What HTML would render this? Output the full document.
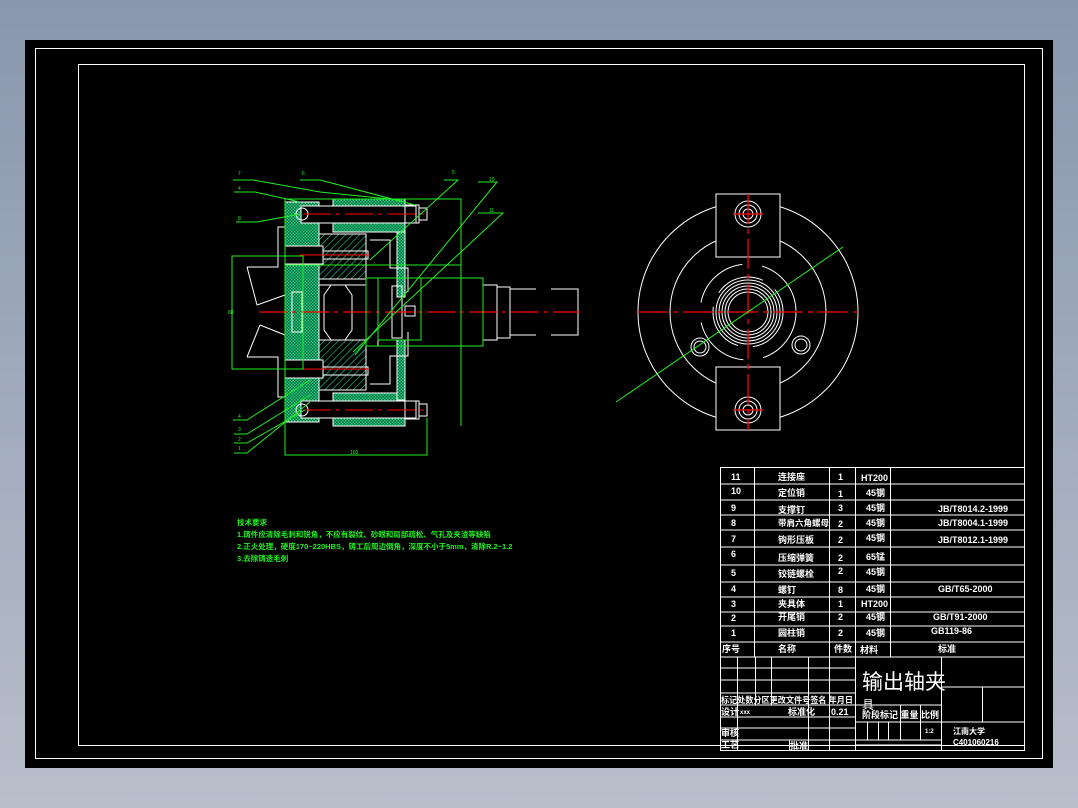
<!DOCTYPE html>
<html><head><meta charset="utf-8"><style>
html,body{margin:0;padding:0;background:#8a98ae;}
body{width:1078px;height:808px;overflow:hidden;background:linear-gradient(#8997ad,#b8bfcb);}
svg{display:block;font-family:"Liberation Sans","Noto Sans CJK SC",sans-serif;}
</style></head><body>
<svg width="1078" height="808" viewBox="0 0 1078 808" xmlns="http://www.w3.org/2000/svg">
<defs>
<pattern id="chk" width="3" height="3" patternUnits="userSpaceOnUse"><rect width="3" height="3" fill="#063"/><rect width="1.5" height="1.5" fill="#2c8"/><rect x="1.5" y="1.5" width="1.5" height="1.5" fill="#2c8"/></pattern>
<pattern id="hat" width="5" height="5" patternUnits="userSpaceOnUse" patternTransform="rotate(45)"><rect width="5" height="5" fill="#000"/><line x1="0" y1="0" x2="0" y2="5" stroke="#2c8" stroke-width="1.2"/></pattern>
</defs>
<rect x="25" y="40" width="1028" height="728" fill="#000"/>
<rect x="35.5" y="48.5" width="1007" height="710" fill="none" stroke="#fff" stroke-width="1"/>
<rect x="78.5" y="64.5" width="946" height="681" fill="none" stroke="#fff" stroke-width="1"/>

<!-- LEFT SECTION VIEW -->
<g stroke="#fff" stroke-width="1" fill="none">
<rect x="285" y="202" width="34" height="220" fill="url(#chk)"/>
<rect x="319" y="234" width="47" height="45" fill="url(#hat)"/>
<rect x="319" y="340" width="47" height="50" fill="url(#hat)"/>
<rect x="333" y="199" width="72" height="33" fill="url(#chk)"/>
<rect x="333" y="393" width="72" height="33" fill="url(#chk)"/>
<rect x="397" y="232" width="8" height="65" fill="url(#chk)"/>
<rect x="397" y="340" width="8" height="60" fill="url(#chk)"/>
<rect x="301" y="206" width="115" height="17" fill="#000"/>
<rect x="301" y="401" width="115" height="17" fill="#000"/>
<rect x="405" y="205" width="14" height="18"/><rect x="405" y="401" width="14" height="18"/>
<rect x="419" y="208" width="8" height="12"/><rect x="419" y="404" width="8" height="12"/>
<circle cx="302" cy="214" r="6"/><circle cx="302" cy="410" r="6"/>
<rect x="285" y="246" width="38" height="18" fill="#000"/>
<rect x="285" y="360" width="38" height="18" fill="#000"/>
<rect x="323" y="251" width="45" height="8"/><rect x="323" y="367" width="45" height="8"/>
<path d="M247 267 L278 267 L278 227 L285 227 M247 357 L278 357 L278 397 L285 397"/>
<path d="M247 267 L257 305 M257 305 L285 295 M247 357 L260 325 M260 325 L285 335"/>
<rect x="292" y="292" width="10" height="40"/>
<rect x="319" y="285" width="47" height="55"/>
<path d="M331 285 L324 295 L324 330 L331 340 M345 285 L352 295 L352 330 L345 340"/>
<rect x="366" y="278" width="12" height="68"/>
<rect x="378" y="278" width="105" height="68"/>
<rect x="392" y="286" width="10" height="52"/>
<rect x="405" y="306" width="10" height="10"/>
<path d="M370 240 L390 240 L390 268 L408 268 L408 292 M370 384 L390 384 L390 356 L408 356 L408 332"/>
<rect x="483" y="285" width="14" height="55"/>
<rect x="497" y="287" width="13" height="51"/>
<path d="M510 289 H536 M510 335 H536 M551 289 H578 V335 H551"/>
</g>
<line x1="259" y1="312" x2="580" y2="312" stroke="#f00" stroke-width="1.3" stroke-dasharray="28,5,4,5"/>
<line x1="303" y1="214" x2="426" y2="214" stroke="#f00" stroke-width="1" stroke-dasharray="28,5,4,5"/>
<line x1="303" y1="410" x2="426" y2="410" stroke="#f00" stroke-width="1" stroke-dasharray="28,5,4,5"/>
<line x1="300" y1="255" x2="370" y2="255" stroke="#f00" stroke-width="1"/>
<line x1="300" y1="369" x2="370" y2="369" stroke="#f00" stroke-width="1"/>
<g stroke="#2e2" stroke-width="1" fill="none">
<rect x="285" y="199" width="176" height="66"/>
<path d="M285 199 L285 455 L427 455 L427 418 M461 199 L461 426"/>
<rect x="232" y="256" width="71" height="113"/>
<rect x="378" y="278" width="43" height="62"/>
<rect x="366" y="278" width="117" height="68"/>
<path d="M233 180 L253 180 L320 192 L400 200 M300 180 L320 180 L415 205 M234 192 L255 192 L300 202 M236 222 L257 222 L300 214 M444 180 L458 180 L370 260 M478 182 L497 182 L355 355 M478 213 L503 213 L353 352 M233 420 L247 420 L310 380 M234 434 L247 434 L310 395 M234 443 L247 443 L305 410 M234 453 L247 453 L310 402"/>
</g>
<g fill="#2e2" font-size="5">
<text x="238" y="175">7</text><text x="302" y="175">6</text><text x="452" y="174">5</text><text x="489" y="181">10</text><text x="489" y="212">11</text>
<text x="238" y="190">4</text><text x="238" y="220">8</text><text x="228" y="314">88</text><text x="350" y="454">160</text>
<text x="238" y="418">4</text><text x="238" y="431">3</text><text x="238" y="441">2</text><text x="238" y="450">1</text>
</g>

<!-- RIGHT VIEW -->
<g stroke="#fff" stroke-width="1" fill="none">
<circle cx="748" cy="312" r="110"/>
<circle cx="748" cy="312" r="78"/>
<circle cx="748" cy="312" r="48" stroke-dasharray="60,20"/>
<circle cx="748" cy="312" r="35" stroke-dasharray="50,15"/>
<circle cx="748" cy="312" r="32"/><circle cx="748" cy="312" r="29"/><circle cx="748" cy="312" r="26"/><circle cx="748" cy="312" r="23"/><circle cx="748" cy="312" r="20"/>
<circle cx="700" cy="347" r="9"/><circle cx="700" cy="347" r="6"/>
<circle cx="801" cy="345" r="9"/><circle cx="801" cy="345" r="6"/>
<rect x="716" y="194" width="64" height="63" fill="#000"/>
<rect x="716" y="367" width="64" height="63" fill="#000"/>
<circle cx="748" cy="214" r="13"/><circle cx="748" cy="214" r="9"/><circle cx="748" cy="214" r="5"/>
<circle cx="748" cy="410" r="13"/><circle cx="748" cy="410" r="9"/><circle cx="748" cy="410" r="5"/>
</g>
<g stroke="#f00" stroke-width="1.3" stroke-dasharray="30,5,5,5">
<line x1="638" y1="312" x2="858" y2="312"/>
<line x1="748" y1="194" x2="748" y2="430"/>
<line x1="733" y1="214" x2="763" y2="214" stroke-dasharray="none"/>
<line x1="733" y1="410" x2="763" y2="410" stroke-dasharray="none"/>
</g>
<line x1="616" y1="402" x2="843" y2="247" stroke="#2e2" stroke-width="1"/>

<!-- TECH NOTES -->
<g fill="#2e2" font-size="7.5" font-weight="bold">
<text x="237" y="525">技术要求</text>
<text x="237" y="537">1.铸件应清除毛刺和锐角，不应有裂纹、砂眼和局部疏松、气孔及夹渣等缺陷</text>
<text x="237" y="549">2.正火处理，硬度170~220HBS，铸工后周边倒角，深度不小于5mm，清除R.2~1.2</text>
<text x="237" y="561">3.去除铸造毛刺</text>
</g>

<!-- TABLE -->
<g stroke="#fff" stroke-width="1" fill="none">
<rect x="720.5" y="467.5" width="304" height="283"/>
<path d="M720 484H1024M720 500H1024M720 515H1024M720 530H1024M720 547H1024M720 565H1024M720 582H1024M720 597H1024M720 612H1024M720 626H1024M720 642H1024M720 657H1024"/>
<path d="M754.5 468V657M829.5 468V657M855.5 468V750M890.5 468V657"/>
<path d="M720 668H855M720 680H855M720 693H855M720 705H855M720 717H855M720 728H855M720 740H855"/>
<path d="M737.5 657V740M755.5 657V705M771.5 657V705M808.5 657V705M829.5 657V750"/>
<path d="M737.5 740V750M789.5 740V750M808.5 705V750"/>
<path d="M941.5 657V750M941 687H1024M982.5 687V722M855 705H941M855 722H1024M900.5 705V740M920.5 705V740M867.5 722V740M878.5 722V740M888.5 722V740M855 740H941M855 745H941"/>
</g>
<g fill="#fff" font-size="9" font-weight="bold">
<text x="731" y="480">11</text><text x="778" y="480">连接座</text><text x="838" y="480">1</text><text x="861" y="481">HT200</text>
<text x="731" y="494">10</text><text x="778" y="496">定位销</text><text x="838" y="497">1</text><text x="866" y="496">45钢</text>
<text x="731" y="511">9</text><text x="778" y="513">支撑钉</text><text x="838" y="511">3</text><text x="866" y="511">45钢</text><text x="938" y="512">JB/T8014.2-1999</text>
<text x="731" y="526">8</text><text x="778" y="526" font-size="8.5">带肩六角螺母</text><text x="838" y="527">2</text><text x="866" y="526">45钢</text><text x="938" y="526">JB/T8004.1-1999</text>
<text x="731" y="542">7</text><text x="778" y="543">钩形压板</text><text x="838" y="543">2</text><text x="866" y="541">45钢</text><text x="938" y="543">JB/T8012.1-1999</text>
<text x="731" y="557">6</text><text x="778" y="561">压缩弹簧</text><text x="838" y="561">2</text><text x="866" y="560">65锰</text>
<text x="731" y="576">5</text><text x="778" y="577">铰链螺栓</text><text x="838" y="574">2</text><text x="866" y="575">45钢</text>
<text x="731" y="592">4</text><text x="778" y="593">螺钉</text><text x="838" y="593">8</text><text x="866" y="592">45钢</text><text x="938" y="592">GB/T65-2000</text>
<text x="731" y="607">3</text><text x="778" y="607">夹具体</text><text x="838" y="607">1</text><text x="861" y="607">HT200</text>
<text x="731" y="621">2</text><text x="778" y="620">开尾销</text><text x="838" y="620">2</text><text x="866" y="620">45钢</text><text x="933" y="620">GB/T91-2000</text>
<text x="731" y="636">1</text><text x="778" y="636">圆柱销</text><text x="838" y="636">2</text><text x="866" y="636">45钢</text><text x="931" y="634">GB119-86</text>
<text x="722" y="652">序号</text><text x="778" y="652">名称</text><text x="834" y="652">件数</text><text x="860" y="653">材料</text><text x="938" y="652">标准</text>
<text x="862" y="689" font-size="21" font-weight="normal">输出轴夹</text>
<text x="862" y="709" font-size="12" font-weight="normal">具</text>
<text x="721" y="703" font-size="8.6" textLength="132" lengthAdjust="spacingAndGlyphs">标记处数分区更改文件号签名 年月日</text>
<text x="721" y="715">设计</text><text x="740" y="714" font-size="6">xxx</text><text x="788" y="715">标准化</text><text x="831" y="715">0.21</text>
<text x="862" y="718">阶段标记 重量 比例</text>
<text x="925" y="733" font-size="6">1:2</text>
<text x="953" y="734" font-size="8">江南大学</text>
<text x="953" y="745" font-size="8">C401060216</text>
<text x="721" y="736">审核</text><text x="721" y="748">工艺</text><text x="790" y="749">批准</text>
</g>
</svg>
</body></html>
